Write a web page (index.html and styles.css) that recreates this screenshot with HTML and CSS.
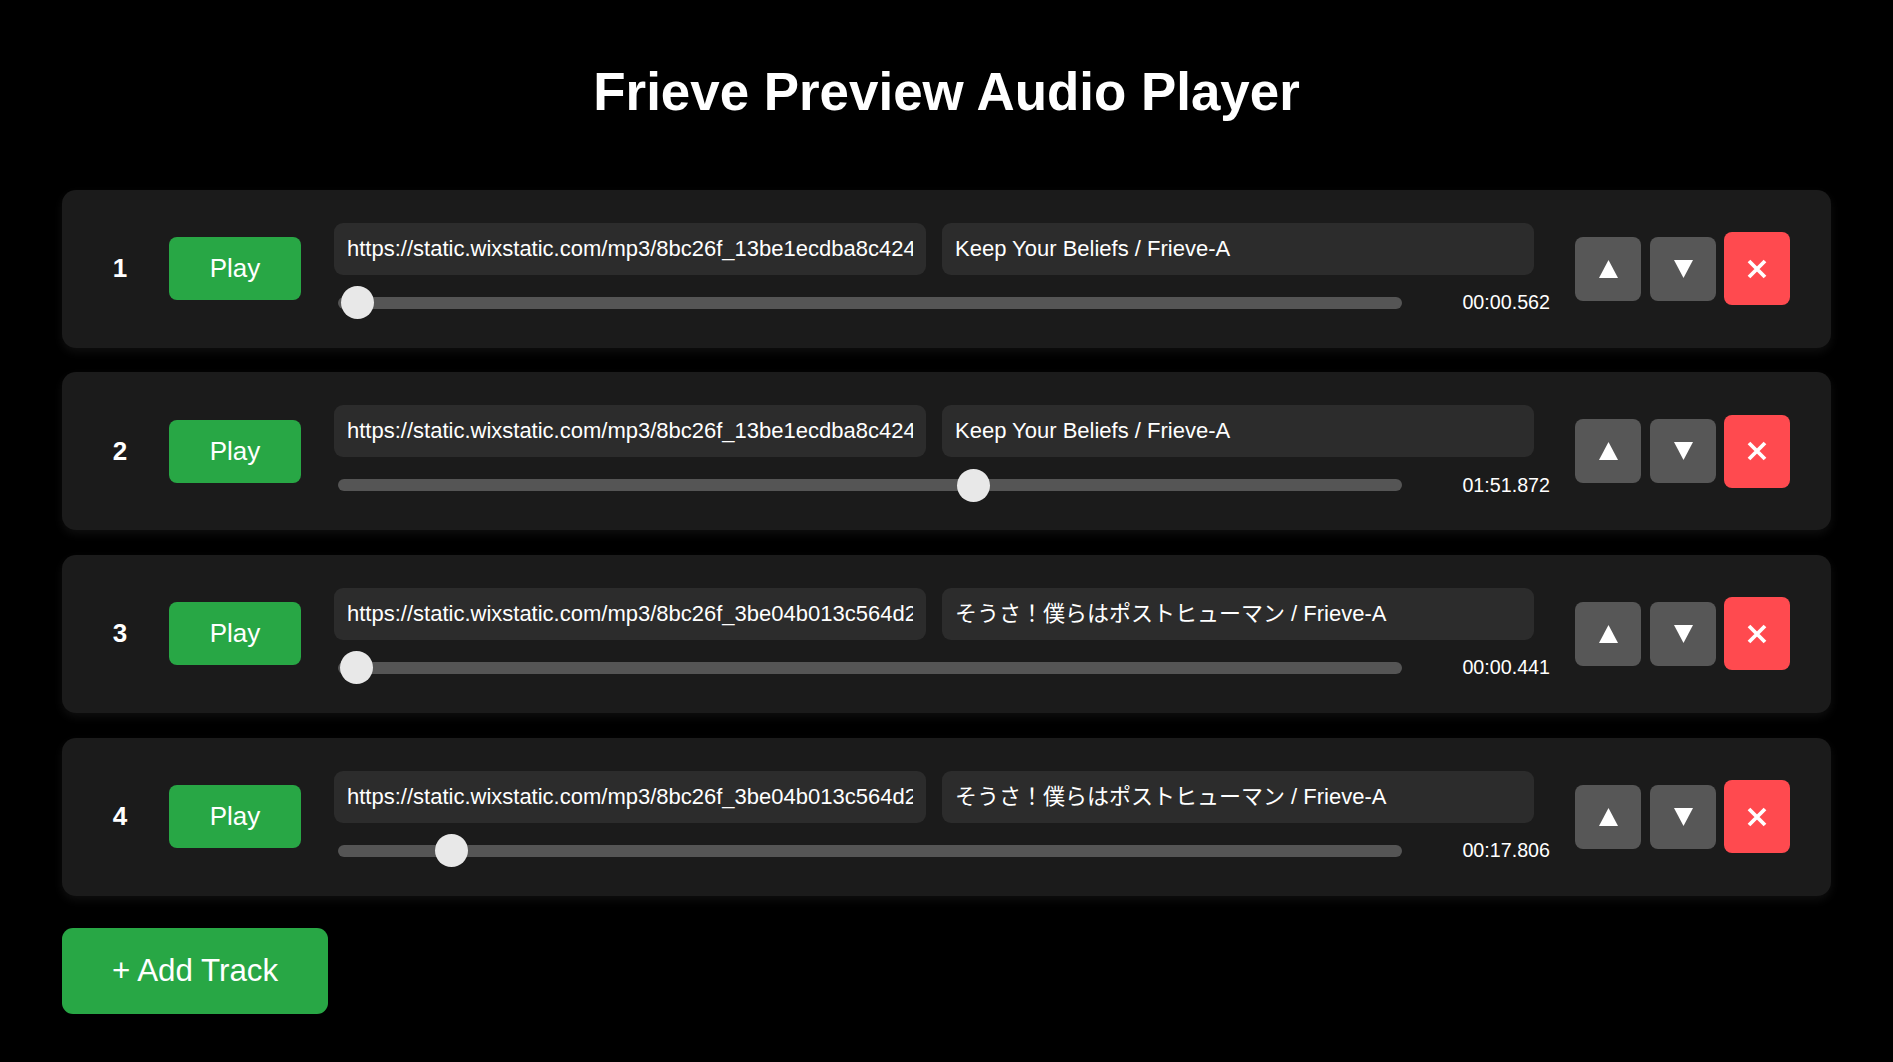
FILE: index.html
```html
<!DOCTYPE html>
<html lang="ja">
<head>
<meta charset="utf-8">
<title>Frieve Preview Audio Player</title>
<link rel="stylesheet" href="styles.css">
</head>
<body>
<h1 class="title">Frieve Preview Audio Player</h1>
<div class="tracks">
  <div class="track">
    <div class="num">1</div>
    <button class="play">Play</button>
    <div class="mid">
      <div class="fields">
        <input class="field" type="text" value="https://static.wixstatic.com/mp3/8bc26f_13be1ecdba8c4246a1c7b1b7d1ff4e1c.mp3">
        <input class="field" type="text" value="Keep Your Beliefs / Frieve-A">
      </div>
      <div class="seekrow">
        <input class="seek" type="range" min="0" max="1000" value="3">
        <span class="time">00:00.562</span>
      </div>
    </div>
    <div class="ctrls">
      <button class="ctl"><svg width="19" height="18" viewBox="0 0 19 18"><polygon points="9.5,0 19,18 0,18" fill="#fff"/></svg></button>
      <button class="ctl"><svg width="19" height="18" viewBox="0 0 19 18"><polygon points="0,0 19,0 9.5,18" fill="#fff"/></svg></button>
      <button class="del"><svg width="20" height="20" viewBox="0 0 20 20"><path d="M2 2 L18 18 M18 2 L2 18" stroke="#fff" stroke-width="3.8"/></svg></button>
    </div>
  </div>
  <div class="track">
    <div class="num">2</div>
    <button class="play">Play</button>
    <div class="mid">
      <div class="fields">
        <input class="field" type="text" value="https://static.wixstatic.com/mp3/8bc26f_13be1ecdba8c4246a1c7b1b7d1ff4e1c.mp3">
        <input class="field" type="text" value="Keep Your Beliefs / Frieve-A">
      </div>
      <div class="seekrow">
        <input class="seek" type="range" min="0" max="1000" value="600">
        <span class="time">01:51.872</span>
      </div>
    </div>
    <div class="ctrls">
      <button class="ctl"><svg width="19" height="18" viewBox="0 0 19 18"><polygon points="9.5,0 19,18 0,18" fill="#fff"/></svg></button>
      <button class="ctl"><svg width="19" height="18" viewBox="0 0 19 18"><polygon points="0,0 19,0 9.5,18" fill="#fff"/></svg></button>
      <button class="del"><svg width="20" height="20" viewBox="0 0 20 20"><path d="M2 2 L18 18 M18 2 L2 18" stroke="#fff" stroke-width="3.8"/></svg></button>
    </div>
  </div>
  <div class="track">
    <div class="num">3</div>
    <button class="play">Play</button>
    <div class="mid">
      <div class="fields">
        <input class="field" type="text" value="https://static.wixstatic.com/mp3/8bc26f_3be04b013c564d2f9a1e6c7b8d2e4f10.mp3">
        <input class="field field-jp" type="text" value="そうさ！僕らはポストヒューマン / Frieve-A">
      </div>
      <div class="seekrow">
        <input class="seek" type="range" min="0" max="1000" value="2">
        <span class="time">00:00.441</span>
      </div>
    </div>
    <div class="ctrls">
      <button class="ctl"><svg width="19" height="18" viewBox="0 0 19 18"><polygon points="9.5,0 19,18 0,18" fill="#fff"/></svg></button>
      <button class="ctl"><svg width="19" height="18" viewBox="0 0 19 18"><polygon points="0,0 19,0 9.5,18" fill="#fff"/></svg></button>
      <button class="del"><svg width="20" height="20" viewBox="0 0 20 20"><path d="M2 2 L18 18 M18 2 L2 18" stroke="#fff" stroke-width="3.8"/></svg></button>
    </div>
  </div>
  <div class="track">
    <div class="num">4</div>
    <button class="play">Play</button>
    <div class="mid">
      <div class="fields">
        <input class="field" type="text" value="https://static.wixstatic.com/mp3/8bc26f_3be04b013c564d2f9a1e6c7b8d2e4f10.mp3">
        <input class="field field-jp" type="text" value="そうさ！僕らはポストヒューマン / Frieve-A">
      </div>
      <div class="seekrow">
        <input class="seek" type="range" min="0" max="1000" value="94">
        <span class="time">00:17.806</span>
      </div>
    </div>
    <div class="ctrls">
      <button class="ctl"><svg width="19" height="18" viewBox="0 0 19 18"><polygon points="9.5,0 19,18 0,18" fill="#fff"/></svg></button>
      <button class="ctl"><svg width="19" height="18" viewBox="0 0 19 18"><polygon points="0,0 19,0 9.5,18" fill="#fff"/></svg></button>
      <button class="del"><svg width="20" height="20" viewBox="0 0 20 20"><path d="M2 2 L18 18 M18 2 L2 18" stroke="#fff" stroke-width="3.8"/></svg></button>
    </div>
  </div>
</div>
<button class="add">+ Add Track</button>
</body>
</html>
```
FILE: styles.css
```css
html, body {
  margin: 0;
  background: #000;
  color: #fff;
  font-family: "Liberation Sans", "Noto Sans CJK JP", sans-serif;
}
body {
  padding: 0 62px;
  overflow: hidden;
}
.title {
  margin: 62px 0 67px;
  font-size: 52.9px;
  font-weight: bold;
  line-height: 60.5px;
  text-align: center;
}
.tracks {
  display: flex;
  flex-direction: column;
  gap: 24.7px;
}
.track {
  box-sizing: border-box;
  height: 158px;
  display: flex;
  align-items: center;
  padding: 0 41px 0 34px;
  background: #1b1b1b;
  border-radius: 14px;
  box-shadow: 0 4px 10px rgba(255, 255, 255, 0.06);
}
.num {
  width: 48px;
  margin-right: 25px;
  text-align: center;
  font-size: 26px;
  font-weight: bold;
}
.play {
  width: 132px;
  height: 63px;
  border: none;
  border-radius: 8px;
  background: #28a745;
  color: #fff;
  font-family: "Liberation Sans", sans-serif;
  font-size: 26px;
  padding: 0;
}
.mid {
  flex: 1;
  margin-left: 33px;
  padding-top: 8px;
}
.fields {
  display: grid;
  grid-template-columns: 1fr 1fr;
  gap: 16px;
  padding-right: 16px;
}
.field {
  box-sizing: border-box;
  width: 100%;
  min-width: 0;
  height: 52px;
  margin: 0;
  padding: 0 13px;
  border: none;
  border-radius: 9px;
  background: #2c2c2c;
  color: #fff;
  font-family: "Liberation Sans", "Noto Sans CJK JP", sans-serif;
  font-size: 22px;
  line-height: 25px;
  outline: none;
}
.field-jp {
  padding-bottom: 5px;
}
.seekrow {
  display: flex;
  align-items: center;
  height: 40px;
  margin-top: 8px;
  padding-left: 4px;
}
.seek {
  flex: 1;
  min-width: 0;
  margin: 0;
  height: 12px;
  -webkit-appearance: none;
  appearance: none;
  background: #555;
  border-radius: 6px;
  outline: none;
}
.seek::-webkit-slider-thumb {
  -webkit-appearance: none;
  appearance: none;
  width: 33px;
  height: 33px;
  border-radius: 50%;
  background: #e8e8e8;
  border: none;
}
.time {
  margin-left: 60px;
  font-size: 19.7px;
  color: #fff;
}
.ctrls {
  display: flex;
  align-items: center;
  margin-left: 25px;
}
.ctl, .del {
  display: flex;
  align-items: center;
  justify-content: center;
  width: 66px;
  border: none;
  border-radius: 8px;
  padding: 0;
}
.ctl {
  height: 64px;
  background: #575757;
  margin-right: 9px;
}
.ctl + .ctl {
  margin-right: 8px;
}
.del {
  height: 73px;
  background: #ff4a4f;
}
.add {
  margin-top: 32.4px;
  padding: 25px 50px;
  border: none;
  border-radius: 11px;
  background: #28a745;
  color: #fff;
  font-family: "Liberation Sans", sans-serif;
  font-size: 31.3px;
  line-height: 36px;
}
```
